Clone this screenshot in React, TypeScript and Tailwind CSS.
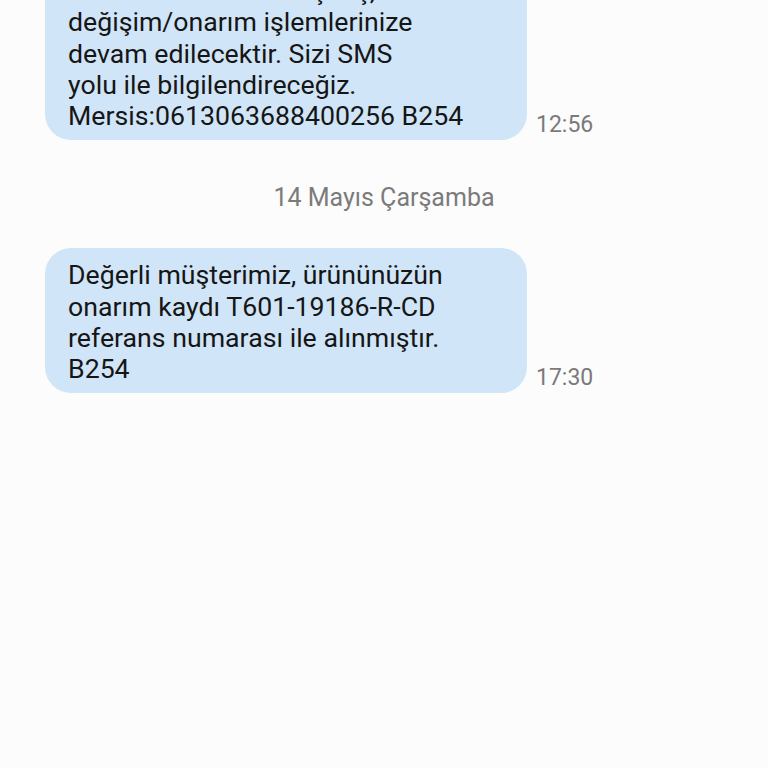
export default function App() {
  const font = { fontFamily: 'Roboto, "Noto Sans", sans-serif' };
  return (
    <div className="w-[768px] h-[768px] overflow-hidden bg-[#fcfcfc]" style={font}>
      <div className="flex flex-col pl-[45px] mt-[-35px]">
        <div className="flex items-end gap-[9px]">
          <div className="w-[482px] rounded-[26px] bg-[#d1e5f8] pl-[23px] pr-[12px] pt-[11px] pb-[8px] text-[26.7px] leading-[31.3px] text-[#161616]">
            <div>ürününüz servise ulaşmış,</div>
            <div>değişim/onarım işlemlerinize</div>
            <div>devam edilecektir. Sizi SMS</div>
            <div>yolu ile bilgilendireceğiz.</div>
            <div>Mersis:0613063688400256 B254</div>
          </div>
          <div className="text-[23px] leading-[27px] text-[#7a7a7a] mb-[2px]">12:56</div>
        </div>
        <div className="h-[108px] flex items-center justify-center pr-[45px] pt-[6px]">
          <div className="text-[25px] text-[#7b7b7b]">14 Mayıs Çarşamba</div>
        </div>
        <div className="flex items-end gap-[9px]">
          <div className="w-[482px] rounded-[26px] bg-[#d1e5f8] pl-[23px] pr-[12px] pt-[12px] pb-[7px] text-[26.7px] leading-[31.3px] text-[#161616]">
            <div>Değerli müşterimiz, ürününüzün</div>
            <div>onarım kaydı T601-19186-R-CD</div>
            <div>referans numarası ile alınmıştır.</div>
            <div>B254</div>
          </div>
          <div className="text-[23px] leading-[27px] text-[#7a7a7a] mb-[2px]">17:30</div>
        </div>
      </div>
    </div>
  );
}
